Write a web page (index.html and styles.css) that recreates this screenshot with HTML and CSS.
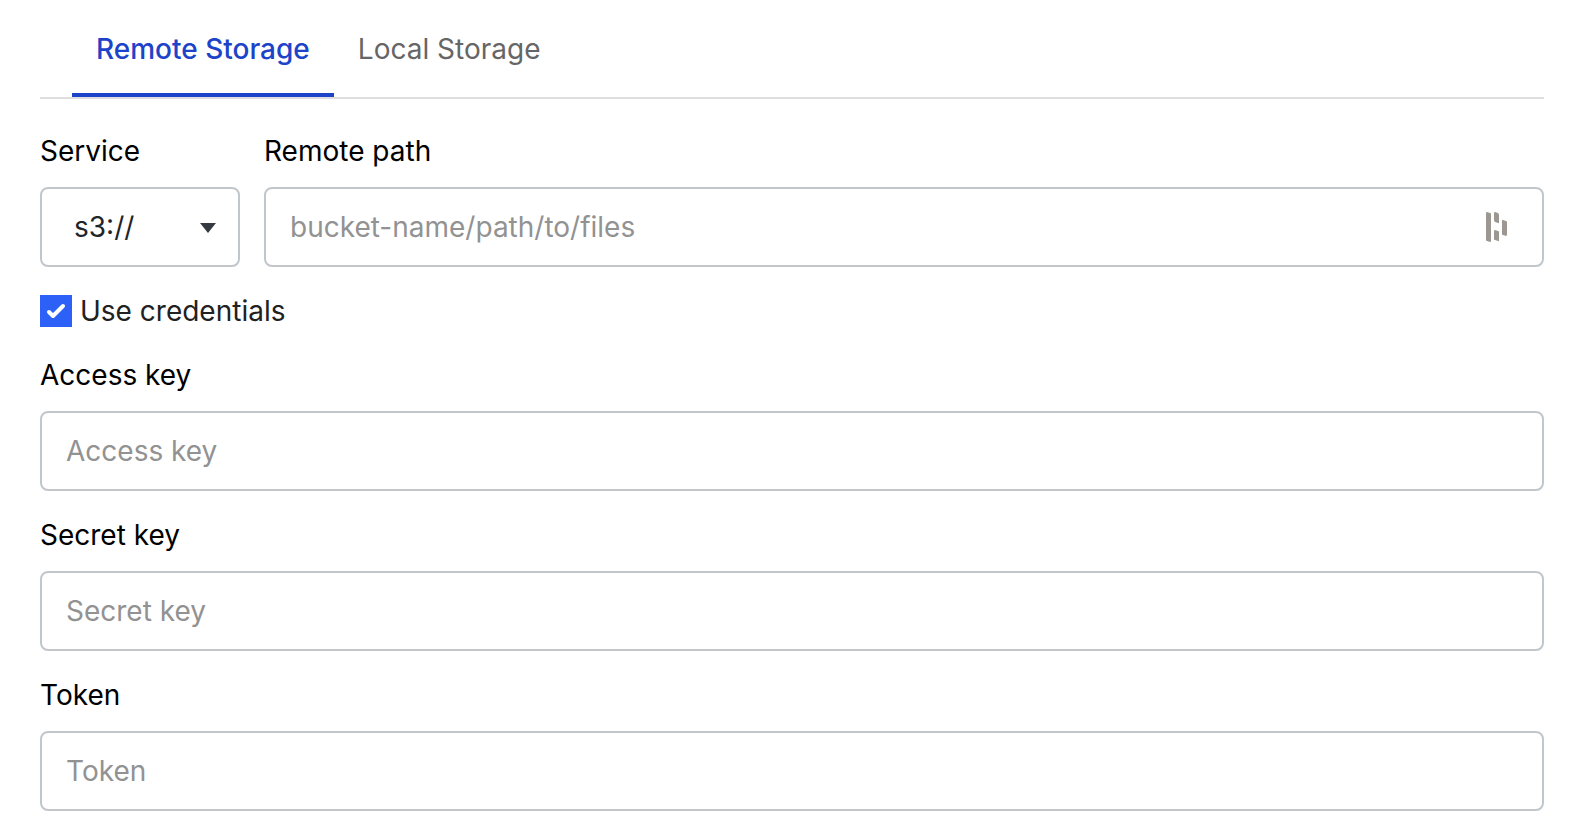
FILE: index.html
```html
<!DOCTYPE html>
<html lang="en">
<head>
    <meta charset="UTF-8">
    <meta name="viewport" content="width=device-width, initial-scale=1.0">
    <title>Storage</title>
    <link rel="stylesheet" href="styles.css">
</head>
<body>
    <div class="tabs" role="tablist">
        <button type="button" class="tab active" role="tab" aria-selected="true">Remote Storage</button>
        <button type="button" class="tab" role="tab" aria-selected="false">Local Storage</button>
    </div>

    <form class="storage-form">
        <div class="row">
            <div class="field service">
                <label for="service">Service</label>
                <div class="select-box">
                    <select id="service" name="service">
                        <option>s3://</option>
                        <option>gs://</option>
                    </select>
                    <svg class="arrow" width="16" height="12" viewBox="0 0 16 12"><path d="M0 2H16L8 12Z" fill="#343a40"/></svg>
                </div>
            </div>
            <div class="field path">
                <label for="path">Remote path</label>
                <div class="input-box">
                    <input type="text" id="path" name="path" placeholder="bucket-name/path/to/files">
                    <svg class="manager" width="22" height="30" viewBox="0 0 22 30" fill="#9c9791">
                        <path d="M0 1Q0 0 1 0L4 1Q5 1 5 2V29Q5 30 4 30L1 29Q0 29 0 28Z"/>
                        <path d="M8 1Q8 0 9 0L12 1Q13 2 13 3V10Q13 12 12 11L9 10Q8 9 8 8Z"/>
                        <path d="M8 19Q8 18 9 18L12 19Q13 19 13 20V28Q13 30 12 29L9 28Q8 28 8 27Z"/>
                        <path d="M16 9Q16 7 17 8L20 9Q21 9 21 10V22Q21 24 20 24L17 23Q16 23 16 22Z"/>
                    </svg>
                </div>
            </div>
        </div>

        <div class="check">
            <input type="checkbox" id="credentials" name="credentials" checked>
            <label for="credentials">Use credentials</label>
        </div>

        <div class="field">
            <label for="access">Access key</label>
            <input type="text" id="access" name="access" placeholder="Access key">
        </div>
        <div class="field">
            <label for="secret">Secret key</label>
            <input type="text" id="secret" name="secret" placeholder="Secret key">
        </div>
        <div class="field">
            <label for="token">Token</label>
            <input type="text" id="token" name="token" placeholder="Token">
        </div>
    </form>

    <script>
        // Switch the highlighted tab
        var tabs = document.getElementsByClassName('tab');
        for (let tab of tabs) {
            tab.addEventListener('click', function () {
                for (let t of tabs) {
                    t.classList.toggle('active', t === tab);
                    t.setAttribute('aria-selected', t === tab);
                }
            });
        }
    </script>
</body>
</html>
```
FILE: styles.css
```css
* {
    box-sizing: border-box;
}
body {
    margin: 0;
    padding: 0 38px 22px 40px;
    background-color: white;
    color: black;
    font-family: Inter, sans-serif;
    font-size: 28px;
    line-height: 40px;
    font-optical-sizing: none;
}
button, input, select {
    font: inherit;
    font-optical-sizing: none;
}
.tabs {
    display: flex;
    padding-left: 32px;
    border-bottom: 2px solid #dedede;
}
.tab {
    padding: 29px 24px 24px;
    border: none;
    border-bottom: 4px solid transparent;
    background: none;
    color: #666;
    cursor: pointer;
}
.tab.active {
    border-bottom-color: #1d43c9;
    color: #1d43c9;
    font-weight: 500;
}
.storage-form {
    display: flex;
    flex-direction: column;
    gap: 24px;
    padding-top: 32px;
}
.row {
    display: flex;
    gap: 24px;
}
.field {
    display: flex;
    flex-direction: column;
    gap: 16px;
}
.service {
    width: 200px;
}
.path {
    flex: 1;
}
.select-box, .input-box {
    display: grid;
    align-items: center;
}
.select-box > *, .input-box > * {
    grid-area: 1 / 1;
}
input[type="text"], select {
    width: 100%;
    height: 80px;
    padding: 0 24px;
    border: 2px solid #c1c6cb;
    border-radius: 8px;
    background-color: white;
    color: #212529;
}
input::placeholder {
    color: #929292;
    opacity: 1;
}
select {
    appearance: none;
    padding: 0 32px;
}
.arrow, .manager {
    justify-self: end;
    pointer-events: none;
}
.arrow {
    margin-right: 24px;
}
.manager {
    margin-right: 36px;
}
.check {
    display: flex;
    align-items: center;
    gap: 8px;
    color: #212121;
}
.check input {
    appearance: none;
    width: 32px;
    height: 32px;
    margin: 0;
    background: #2c60f6 url("data:image/svg+xml,%3Csvg xmlns='http://www.w3.org/2000/svg' viewBox='0 0 32 32'%3E%3Cpath d='M9 17L13 21L23 11' fill='none' stroke='white' stroke-width='4' stroke-linecap='round' stroke-linejoin='round'/%3E%3C/svg%3E");
}
.check input:not(:checked) {
    background: white;
    border: 2px solid #c1c6cb;
}
```
